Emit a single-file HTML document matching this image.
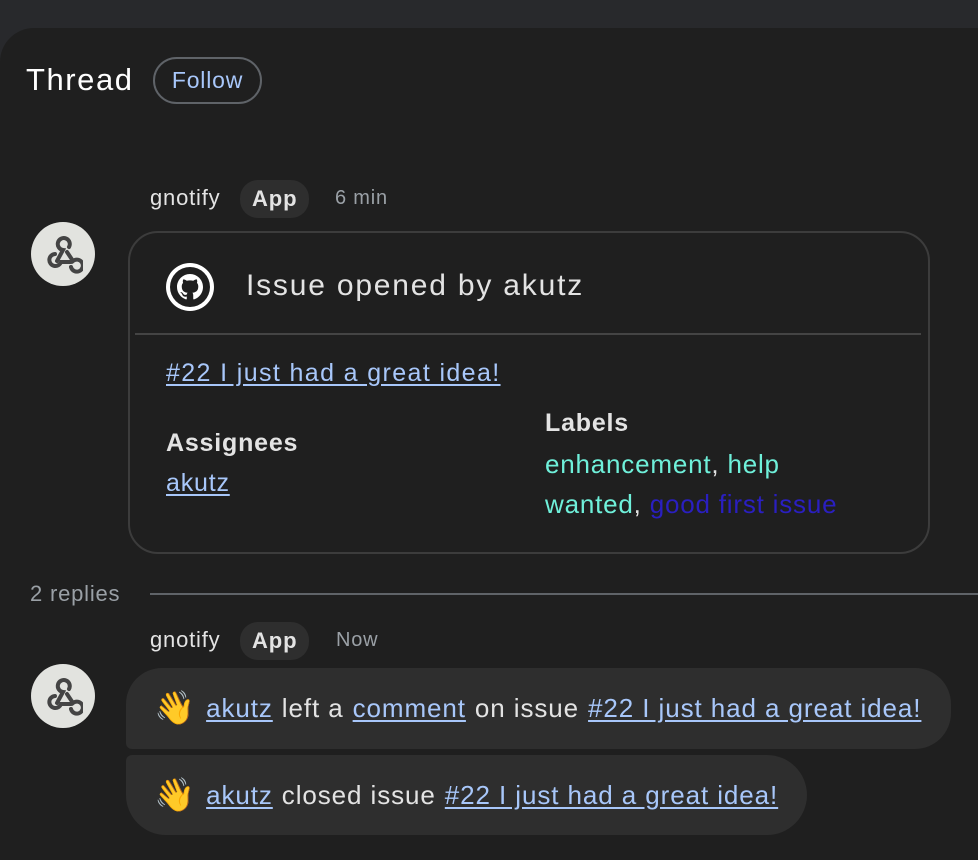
<!DOCTYPE html>
<html><head><meta charset="utf-8"><style>
*{margin:0;padding:0;box-sizing:border-box}
html,body{width:978px;height:860px;overflow:hidden}
body{background:#28292c;font-family:"Liberation Sans",sans-serif;position:relative;color:#e3e3e3;letter-spacing:0.05em}
.panel{position:absolute;left:0;top:28px;width:1000px;height:860px;background:#1f1f1f;border-top-left-radius:34px}
.abs{position:absolute;white-space:nowrap}
a{color:#a8c7fa;text-decoration:underline;text-underline-offset:3px}
.av{position:absolute;width:64px;height:64px;border-radius:50%;background:#e2e3df;display:flex;align-items:center;justify-content:center}
.app{position:absolute;background:#2e2e2e;border-radius:18px;height:38px;font-size:22px;font-weight:bold;color:#e3e3e3;padding:0 12px;line-height:38px;letter-spacing:0.04em}
.meta{font-size:22px;color:#e3e3e3}
.t{font-size:20px;color:#9aa0a6}
.card{position:absolute;left:128px;top:231px;width:802px;height:323px;border:2px solid #3c3c3c;border-radius:30px}
.bub{position:absolute;background:#2e2e2e;font-size:26px;color:#e3e3e3;padding-left:28px;display:flex;align-items:center;letter-spacing:0.035em}
.bub a{margin:0 9px}
.em{font-size:33px;letter-spacing:0}
</style></head><body>
<div class="panel"></div>
<div class="abs" style="left:26px;top:62px;font-size:31px;color:#fff;letter-spacing:0.05em">Thread</div>
<div class="abs" style="left:153px;top:57px;width:109px;height:47px;border:2px solid #5f6368;border-radius:24px;color:#a8c7fa;font-size:23px;text-align:center;line-height:43px">Follow</div>

<div class="abs meta" style="left:150px;top:185px">gnotify</div>
<div class="app" style="left:240px;top:180px">App</div>
<div class="abs t" style="left:335px;top:187px">6 min</div>
<div class="av" style="left:31px;top:222px"><svg width="40" height="40" viewBox="0 0 40 40" fill="none" stroke="#444" stroke-width="4" stroke-linecap="round"><path d="M14 27 L20 16 A6 6 0 1 1 26 13"/><path d="M12 20 A6 6 0 1 0 18 28 H28"/><path d="M24 18 L30 27 A6 6 0 1 1 28 33"/></svg></div>
<div class="card"></div>
<div class="av" style="left:166px;top:263px;width:48px;height:48px;background:#fff"><div style="width:40px;height:40px;border-radius:50%;background:#1f1f1f;display:flex;align-items:center;justify-content:center"><svg width="26" height="26" viewBox="0 0 16 16"><path fill="#fff" d="M8 0C3.58 0 0 3.580 0 8c0 3.540 2.290 6.530 5.470 7.590.4.07.55-.17.55-.38v-1.33c-2.23.48-2.7-1.070-2.7-1.070-.36-.92-.89-1.17-.89-1.17-.73-.5.06-.49.06-.49.8.06 1.23.83 1.23.83.72 1.22 1.87.87 2.33.66.07-.52.28-.87.51-1.070-1.78-.2-3.64-.89-3.64-3.95 0-.87.31-1.59.82-2.15-.08-.2-.36-1.02.08-2.12 0 0 .67-.21 2.2.82A7.6 7.6 0 0 1 8 3.9c.68 0 1.36.09 2 .27 1.53-1.04 2.2-.82 2.2-.82.44 1.1.16 1.92.08 2.12.51.56.82 1.27.82 2.15 0 3.07-1.87 3.75-3.65 3.95.29.25.54.73.54 1.48v2.2c0 .21.15.46.55.38A8 8 0 0 0 16 8c0-4.42-3.58-8-8-8z"/></svg></div></div>
<div class="abs" style="left:246px;top:269px;font-size:30px;color:#e3e3e3;letter-spacing:0.06em">Issue opened by akutz</div>
<div class="abs" style="left:135px;top:333px;width:786px;height:2px;background:#444"></div>
<div class="abs" style="left:166px;top:359px;font-size:25px;letter-spacing:0.055em"><a href="#">#22 I just had a great idea!</a></div>
<div class="abs" style="left:166px;top:429px;font-size:25px;font-weight:bold">Assignees</div>
<div class="abs" style="left:166px;top:469px;font-size:25px"><a href="#">akutz</a></div>
<div class="abs" style="left:545px;top:409px;font-size:25px;font-weight:bold">Labels</div>
<div class="abs" style="left:545px;top:444px;font-size:26px;line-height:40px"><span style="color:#6ff0da">enhancement</span>, <span style="color:#6ff0da">help</span><br><span style="color:#6ff0da">wanted</span>, <span style="color:#2a1fc0">good first issue</span></div>

<div class="abs t" style="left:30px;top:581px;font-size:22px">2 replies</div>
<div class="abs" style="left:150px;top:593px;width:830px;height:2px;background:#5f6368"></div>

<div class="abs meta" style="left:150px;top:627px">gnotify</div>
<div class="app" style="left:240px;top:622px">App</div>
<div class="abs t" style="left:336px;top:629px">Now</div>
<div class="av" style="left:31px;top:664px"><svg width="40" height="40" viewBox="0 0 40 40" fill="none" stroke="#444" stroke-width="4" stroke-linecap="round"><path d="M14 27 L20 16 A6 6 0 1 1 26 13"/><path d="M12 20 A6 6 0 1 0 18 28 H28"/><path d="M24 18 L30 27 A6 6 0 1 1 28 33"/></svg></div>
<div class="bub" style="left:126px;top:668px;width:825px;height:81px;border-radius:36px 36px 36px 6px"><span class="em">👋</span><a href="#" style="margin-left:11px">akutz</a>left a<a href="#">comment</a>on issue<a href="#">#22 I just had a great idea!</a></div>
<div class="bub" style="left:126px;top:755px;width:681px;height:80px;border-radius:6px 40px 40px 40px"><span class="em">👋</span><a href="#" style="margin-left:11px">akutz</a>closed issue<a href="#">#22 I just had a great idea!</a></div>
</body></html>
